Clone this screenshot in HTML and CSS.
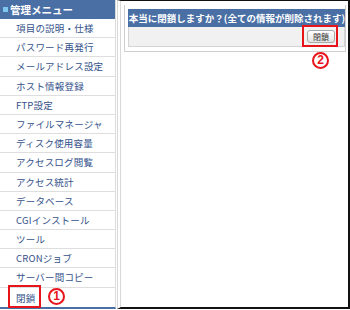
FILE: index.html
```html
<!DOCTYPE html>
<html lang="ja">
<head>
  <meta charset="UTF-8">
  <title>管理メニュー</title>
  <link rel="stylesheet" href="styles.css">
</head>
<body>
  <div id="page">
    <div class="sidebar">
      <div class="menu-title"><span class="bullet"></span>管理メニュー</div>
      <ul class="menu">
        <li>項目の説明・仕様</li>
        <li>パスワード再発行</li>
        <li>メールアドレス設定</li>
        <li>ホスト情報登録</li>
        <li>FTP設定</li>
        <li>ファイルマネージャ</li>
        <li>ディスク使用容量</li>
        <li>アクセスログ閲覧</li>
        <li>アクセス統計</li>
        <li>データベース</li>
        <li>CGIインストール</li>
        <li>ツール</li>
        <li>CRONジョブ</li>
        <li>サーバー間コピー</li>
        <li class="close-item">閉鎖</li>
      </ul>
    </div>
    <div class="main">
      <div class="panel">
        <div class="panel-title">本当に閉鎖しますか？(全ての情報が削除されます)</div>
        <div class="panel-row">
          <button class="btn">閉鎖</button>
        </div>
      </div>
    </div>
  </div>

  <!-- annotation marks -->
  <div class="mark mark-menu"></div>
  <div class="num num-1">1</div>
  <div class="mark mark-btn"></div>
  <div class="num num-2">2</div>
</body>
</html>
```

FILE: styles.css
```css
body {
  margin: 0;
  font-family: "Noto Sans CJK JP", "DejaVu Sans", sans-serif;
  background-color: #ffffff;
}
#page {
  display: flex;
  width: 350px;
  height: 310px;
}
.sidebar {
  width: 118px;
  border-right: 1px solid #dcdcdc;
  border-bottom: 2px solid #4a6fa5;
  box-sizing: border-box;
  height: 309px;
}
.menu-title {
  display: flex;
  align-items: center;
  height: 19px;
  background-color: #4a6fa5;
  color: #ffffff;
  font-size: 10.5px;
  font-weight: bold;
  padding-left: 3px;
}
.bullet {
  width: 5px;
  height: 5px;
  background-color: #7ec8f0;
  margin-right: 2px;
}
.menu {
  list-style: none;
  margin: 0;
  padding: 0;
}
.menu li {
  height: 18.2px;
  line-height: 18px;
  border-bottom: 1px solid #dedede;
  padding-left: 16px;
  font-size: 9.5px;
  color: #34528a;
  letter-spacing: 0.2px;
}
.menu li.close-item {
  border-bottom: none;
  padding-top: 1px;
}
.main {
  flex: 1;
  border-top: 1px solid #111;
  border-right: 2px solid #111;
  border-bottom: 2px solid #111;
  border-left: 4px double #d8d8d8;
  margin-left: 1px;
  padding: 4px 2px 0 3px;
  height: 309px;
  box-sizing: border-box;
}
.panel {
  border: 1px solid #cfcfcf;
  border-top: none;
  padding: 4px 0 4px 3px;
}
.panel-title {
  background-color: #4a6fa5;
  color: #ffffff;
  font-size: 9.5px;
  font-weight: bold;
  height: 18px;
  line-height: 18px;
  padding-left: 1px;
  white-space: nowrap;
  overflow: hidden;
}
.panel-row {
  display: flex;
  justify-content: flex-end;
  align-items: center;
  height: 19px;
  background-color: #f1f1f1;
  border: 1px solid #d4d4d4;
  border-top: none;
  padding-right: 9px;
}
.btn {
  font-family: inherit;
  font-size: 8px;
  color: #333;
  height: 13px;
  padding: 0 5px;
  line-height: 11px;
  border: 1px solid #a8a8a8;
  border-radius: 3px;
  background: linear-gradient(#ffffff, #e2e2e2);
}
.mark {
  position: absolute;
  border: 2px solid #e8141b;
  box-sizing: border-box;
}
.mark-menu {
  left: 8px;
  top: 285px;
  width: 33px;
  height: 23px;
}
.mark-btn {
  left: 302px;
  top: 25px;
  width: 36px;
  height: 22px;
}
.num {
  position: absolute;
  width: 13px;
  height: 13px;
  border: 2px solid #e8141b;
  border-radius: 50%;
  color: #e8141b;
  font-family: "Liberation Sans", sans-serif;
  font-size: 12px;
  font-weight: bold;
  line-height: 13px;
  text-align: center;
}
.num-1 {
  left: 48px;
  top: 288px;
}
.num-2 {
  left: 312px;
  top: 52px;
}
```
